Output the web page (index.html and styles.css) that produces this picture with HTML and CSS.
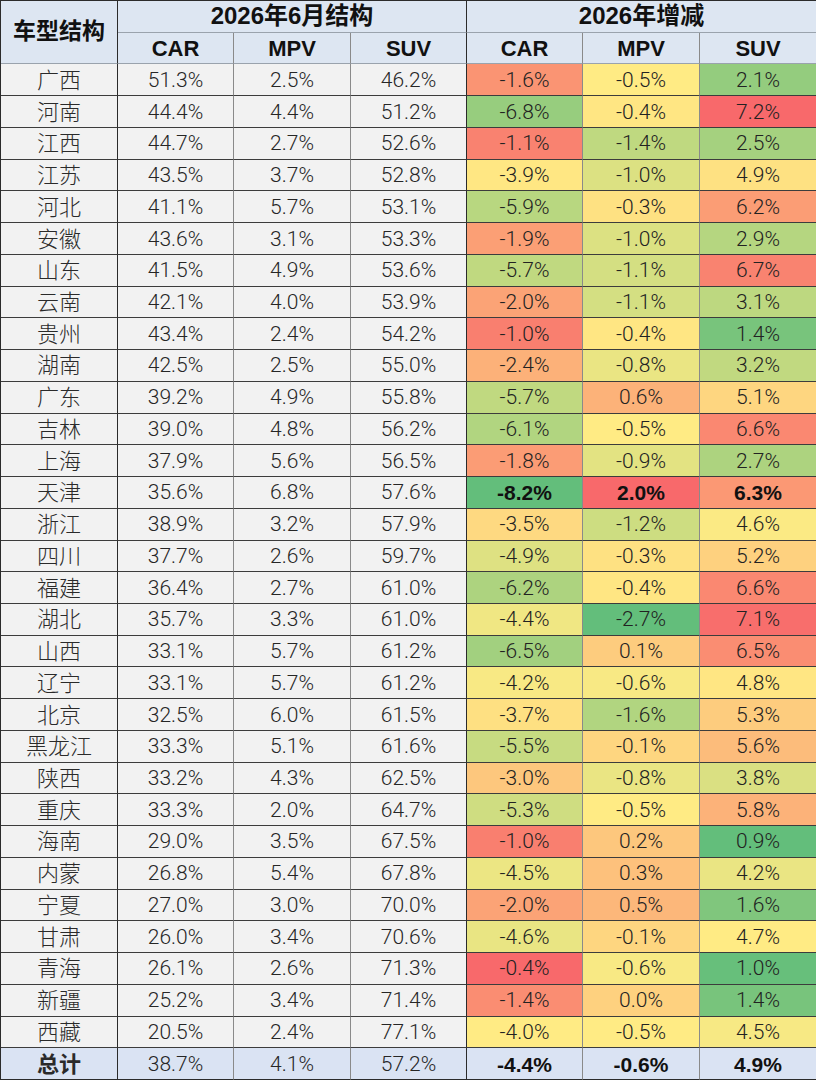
FILE: index.html
```html
<!DOCTYPE html>
<html lang="zh">
<head>
<meta charset="utf-8">
<title>车型结构</title>
<link rel="stylesheet" href="styles.css">
</head>
<body>
<div class="sheet" id="sheet">
  <div class="c hd corner">车型结构</div>
  <div class="c hd grp g1">2026年6月结构</div>
  <div class="c hd grp g2">2026年增减</div>
  <div class="c hd sub">CAR</div>
  <div class="c hd sub">MPV</div>
  <div class="c hd sub major">SUV</div>
  <div class="c hd sub">CAR</div>
  <div class="c hd sub">MPV</div>
  <div class="c hd sub last">SUV</div>
</div>
<script src="script.js"></script>
</body>
</html>
```
FILE: styles.css
```css
* { box-sizing: border-box; }
html, body { margin: 0; padding: 0; background: #ffffff; }
.sheet {
  width: 816px;
  height: 1080px;
  display: grid;
  grid-template-columns: 117px 116px 117px 116px 116px 117px 117px;
  grid-template-rows: repeat(34, 1fr);
  border-top: 1px solid #2b2b2b;
  border-left: 1px solid #2b2b2b;
  font-family: Roboto, "Liberation Sans", "Noto Sans CJK SC", sans-serif;
  color: #262626;
}
.c {
  display: flex;
  align-items: center;
  justify-content: center;
  border-right: 1px solid #8a8a8a;
  border-bottom: 1px solid #3c3c3c;
  background: #f2f2f2;
  font-size: 21px;
  font-weight: 300;
  white-space: nowrap;
  line-height: 1;
  padding-top: 1px;
}
.hd {
  background: #dde6f2;
  color: #111;
  font-family: "Liberation Sans", "Noto Sans CJK SC", sans-serif;
  font-weight: 700;
  font-size: 22px;
  border-bottom-color: #9aa3ad;
}
.corner {
  grid-row: span 2;
  border-right-color: #2b2b2b;
  border-bottom-color: #9aa3ad;
  font-family: "Noto Sans CJK SC", sans-serif;
  font-size: 23px;
  padding-top: 0;
  padding-bottom: 5px;
}
.grp { grid-column: span 3; font-size: 24px; padding-top: 0; padding-bottom: 1px; }
.grp.g1 { border-right-color: #2b2b2b; }
.grp.g2 { border-right-color: #2b2b2b; }
.sub { border-right-color: #8a8a8a; }
.sub.major { border-right-color: #2b2b2b; }
.sub.last { border-right-color: #2b2b2b; }
.name {
  font-family: "Noto Sans CJK SC", sans-serif;
  font-weight: 300;
  font-size: 22px;
  color: #2a2a2a;
  border-right-color: #2b2b2b;
  padding-top: 0;
  padding-bottom: 4px;
}
.sep { border-right-color: #2b2b2b; }
.end { border-right-color: #2b2b2b; }
.delta { color: #222; }
.strong { font-weight: 700; font-family: "Liberation Sans", sans-serif; color: #111; }
.total { background: #dae3f3; border-bottom-color: #2b2b2b; }
.total.name { font-weight: 700; }
```
FILE: script.js
```js
var rows = [
["广西","51.3%","2.5%","46.2%","-1.6%","-0.5%","2.1%"],
["河南","44.4%","4.4%","51.2%","-6.8%","-0.4%","7.2%"],
["江西","44.7%","2.7%","52.6%","-1.1%","-1.4%","2.5%"],
["江苏","43.5%","3.7%","52.8%","-3.9%","-1.0%","4.9%"],
["河北","41.1%","5.7%","53.1%","-5.9%","-0.3%","6.2%"],
["安徽","43.6%","3.1%","53.3%","-1.9%","-1.0%","2.9%"],
["山东","41.5%","4.9%","53.6%","-5.7%","-1.1%","6.7%"],
["云南","42.1%","4.0%","53.9%","-2.0%","-1.1%","3.1%"],
["贵州","43.4%","2.4%","54.2%","-1.0%","-0.4%","1.4%"],
["湖南","42.5%","2.5%","55.0%","-2.4%","-0.8%","3.2%"],
["广东","39.2%","4.9%","55.8%","-5.7%","0.6%","5.1%"],
["吉林","39.0%","4.8%","56.2%","-6.1%","-0.5%","6.6%"],
["上海","37.9%","5.6%","56.5%","-1.8%","-0.9%","2.7%"],
["天津","35.6%","6.8%","57.6%","-8.2%","2.0%","6.3%",1],
["浙江","38.9%","3.2%","57.9%","-3.5%","-1.2%","4.6%"],
["四川","37.7%","2.6%","59.7%","-4.9%","-0.3%","5.2%"],
["福建","36.4%","2.7%","61.0%","-6.2%","-0.4%","6.6%"],
["湖北","35.7%","3.3%","61.0%","-4.4%","-2.7%","7.1%"],
["山西","33.1%","5.7%","61.2%","-6.5%","0.1%","6.5%"],
["辽宁","33.1%","5.7%","61.2%","-4.2%","-0.6%","4.8%"],
["北京","32.5%","6.0%","61.5%","-3.7%","-1.6%","5.3%"],
["黑龙江","33.3%","5.1%","61.6%","-5.5%","-0.1%","5.6%"],
["陕西","33.2%","4.3%","62.5%","-3.0%","-0.8%","3.8%"],
["重庆","33.3%","2.0%","64.7%","-5.3%","-0.5%","5.8%"],
["海南","29.0%","3.5%","67.5%","-1.0%","0.2%","0.9%"],
["内蒙","26.8%","5.4%","67.8%","-4.5%","0.3%","4.2%"],
["宁夏","27.0%","3.0%","70.0%","-2.0%","0.5%","1.6%"],
["甘肃","26.0%","3.4%","70.6%","-4.6%","-0.1%","4.7%"],
["青海","26.1%","2.6%","71.3%","-0.4%","-0.6%","1.0%"],
["新疆","25.2%","3.4%","71.4%","-1.4%","0.0%","1.4%"],
["西藏","20.5%","2.4%","77.1%","-4.0%","-0.5%","4.5%"]
];
var total = ["总计","38.7%","4.1%","57.2%","-4.4%","-0.6%","4.9%"];

function pct(sorted, p) {
  var n = sorted.length, k = (n - 1) * p, f = Math.floor(k), c = Math.ceil(k);
  return sorted[f] + (sorted[c] - sorted[f]) * (k - f);
}
function mix(a, b, t) {
  return [0,1,2].map(function (i) { return Math.round(a[i] + (b[i] - a[i]) * t); });
}
var LO = [99,190,123], MID = [255,235,132], HI = [248,105,107];
var scales = {};
[4,5,6].forEach(function (col) {
  var vals = rows.map(function (r) { return parseFloat(r[col]); });
  var s = vals.slice().sort(function (a, b) { return a - b; });
  scales[col] = { min: s[0], max: s[s.length - 1], mid: pct(s, 0.5) };
});
function colorFor(col, v) {
  var sc = scales[col], rgb;
  if (v <= sc.mid) rgb = mix(LO, MID, sc.mid === sc.min ? 1 : (v - sc.min) / (sc.mid - sc.min));
  else rgb = mix(MID, HI, (v - sc.mid) / (sc.max - sc.mid));
  return "rgb(" + rgb.join(",") + ")";
}

var sheet = document.getElementById("sheet");
function addRow(r, isTotal) {
  r.slice(0, 7).forEach(function (txt, i) {
    var d = document.createElement("div");
    var cls = ["c"];
    if (i === 0) cls.push("name");
    if (i === 3) cls.push("sep");
    if (i === 6) cls.push("end");
    if (i >= 4) cls.push("delta");
    if (isTotal) cls.push("total");
    if ((isTotal || r[7]) && i >= 4) cls.push("strong");
    d.className = cls.join(" ");
    d.textContent = txt;
    if (!isTotal && i >= 4) d.style.background = colorFor(i, parseFloat(txt));
    sheet.appendChild(d);
  });
}
rows.forEach(function (r) { addRow(r, false); });
addRow(total, true);
```
